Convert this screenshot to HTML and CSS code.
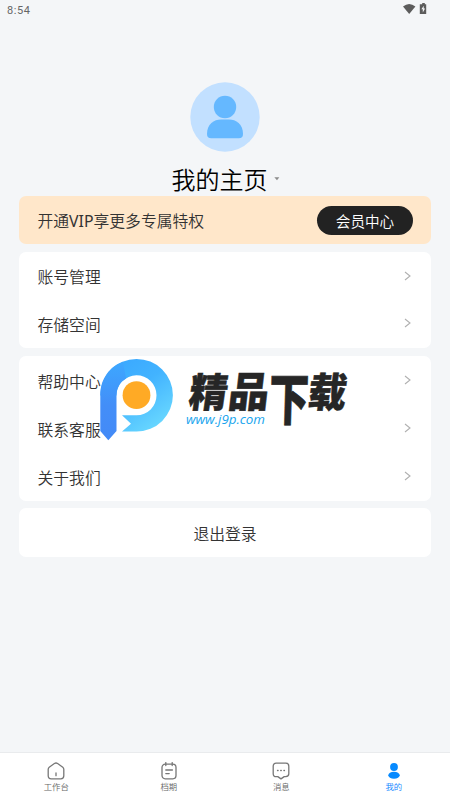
FILE: index.html
```html
<!DOCTYPE html>
<html lang="zh-CN">
<head>
<meta charset="utf-8">
<title>我的主页</title>
<link rel="stylesheet" href="styles.css">
</head>
<body>
<div class="app">
  <header class="status">
    <span>8:54</span>
    <svg width="26" height="12" viewBox="0 0 26 12" fill="#5c5c5c">
      <path d="M0 3.600Q6.200-1.500 12.400 3.600L6.200 11z"/>
      <path d="M17.800 1.200h1.400V0h2.600v1.200h1.400V11h-6.400V1.200z"/>
      <path fill="#f4f6f8" d="M20.700 2.700 18.400 6.300h1.400v3.100l2.300-3.900h-1.400z"/>
    </svg>
  </header>
  <main>
    <section class="profile">
      <svg class="avatar" width="70" height="70" viewBox="0 0 70 70">
        <circle cx="35" cy="35" r="34.700" fill="#c2e0ff"/>
        <circle cx="35" cy="25" r="11.200" fill="#65b8ff"/>
        <path fill="#65b8ff" d="M17 52C17 42 24 37.500 31 37.500h8c7 0 14 4.500 14 14.500q0 4.300-4.200 4.300H21.200Q17 56.300 17 52z"/>
      </svg>
      <h1>我的主页<svg width="6" height="4" viewBox="0 0 6 4"><path d="M.3.3h5L3 3.300z" fill="#8c8c8c"/></svg></h1>
    </section>
    <section class="card vip"><span>开通<span class="latin">VIP</span>享更多专属特权</span><button>会员中心</button></section>
    <section class="card pair">
      <div class="row">账号管理<svg class="arrow" viewBox="0 0 7 10"><path d="M1 1l5 4-5 4"/></svg></div>
      <div class="row">存储空间<svg class="arrow" viewBox="0 0 7 10"><path d="M1 1l5 4-5 4"/></svg></div>
    </section>
    <section class="card triple">
      <div class="row">帮助中心<svg class="arrow" viewBox="0 0 7 10"><path d="M1 1l5 4-5 4"/></svg></div>
      <div class="row">联系客服<svg class="arrow" viewBox="0 0 7 10"><path d="M1 1l5 4-5 4"/></svg></div>
      <div class="row">关于我们<svg class="arrow" viewBox="0 0 7 10"><path d="M1 1l5 4-5 4"/></svg></div>
    </section>
    <section class="card logout">退出登录</section>
  </main>
  <nav>
    <div class="tab">
      <svg viewBox="0 0 18 18"><path d="M1.200 7.200Q1.200 6 2.200 5.200L7.400 1.500Q9 .5 10.600 1.500l5.200 3.700q1 .8 1 2v6.600q0 3-3 3H4.200q-3 0-3-3zM9 11v2.700"/></svg>工作台
    </div>
    <div class="tab">
      <svg viewBox="0 0 18 18"><rect x="2" y="2.200" width="14" height="14.600" rx="3.200"/><path d="M5.800.6v3M12.200.6v3M5.800 8h6.600M5.800 11.600h3.400"/></svg>档期
    </div>
    <div class="tab">
      <svg viewBox="0 0 18 18"><path d="M4.200 1.200h9.600q3 0 3 3v7.600q0 2.800-3 2.800h-1.600L9 16.900l-3.200-2.300H4.200q-3 0-3-2.800V4.200q0-3 3-3z"/><path d="M5.500 8.500h.6M8.700 8.500h.6M11.900 8.500h.6"/></svg>消息
    </div>
    <div class="tab active">
      <svg viewBox="0 0 18 18"><circle cx="9" cy="5" r="3.900"/><ellipse cx="9" cy="13.200" rx="5.700" ry="3.500"/></svg>我的
    </div>
  </nav>
  <svg class="brand" width="260" height="90" viewBox="95 355 260 90">
    <defs>
      <linearGradient id="bowl" x1="0" y1="0" x2=".7" y2="1"><stop offset="0" stop-color="#38a5ff"/><stop offset=".5" stop-color="#42b3ff"/><stop offset="1" stop-color="#68d7ff"/></linearGradient>
      <linearGradient id="stem" x1="0" y1="0" x2="0" y2="1"><stop offset="0" stop-color="#3da8ff"/><stop offset=".55" stop-color="#438ef8"/><stop offset="1" stop-color="#438af7"/></linearGradient>
    </defs>
    <circle cx="136.500" cy="395" r="22" fill="#fff"/>
    <path fill="url(#bowl)" d="M100.300 395.500A36.300 36.300 0 1 1 136.500 431.500H122l9-7.800-9-8.400H136.500A20 20 0 1 0 116.500 395.500z"/>
    <path fill="url(#stem)" d="M100.300 395C100.300 379 110 366 123 361.800L126 378.500Q116.500 384 116.500 395V431L108.300 440.300 100.300 431z"/>
    <circle cx="136.500" cy="395.200" r="13.900" fill="#ffaa25"/>
    <g class="brand-name">
      <text transform="matrix(.96 0 -.14 1 187.500 406.500)">精</text>
      <text transform="matrix(1.020 0 -.12 1.040 227 407)">品</text>
      <text transform="matrix(1 0 -.04 1.400 268.500 420)">下</text>
      <text transform="matrix(.96 0 -.13 1 306.500 406.500)">载</text>
    </g>
    <text class="brand-url" x="186" y="423.500" textLength="79" lengthAdjust="spacingAndGlyphs">www.j9p.com</text>
  </svg>
</div>
</body>
</html>
```
FILE: styles.css
```css
* { box-sizing: border-box; }
body { margin: 0; background: #f4f6f8; font-family: "Noto Sans CJK SC", sans-serif; color: #333; }
.app { position: relative; height: 800px; display: flex; flex-direction: column; }
.status { height: 20px; padding: 0 21px 0 7px; display: flex; align-items: center; justify-content: space-between; font: 11px Roboto, sans-serif; letter-spacing: .6px; color: #666; }
.status svg { margin-top: -2px; }
main { flex: 1; padding: 0 19px; }
.profile { height: 176px; padding-top: 62px; display: flex; flex-direction: column; align-items: center; }
.avatar { flex: none; }
h1 { margin: 9px 0 0 5px; font-size: 24px; line-height: 36px; font-weight: 350; color: #000; display: flex; align-items: center; gap: 6px; }
h1 svg { margin-right: 4px; margin-top: -1px; }
.card { background: #fff; border-radius: 7px; font-size: 15.8px; font-weight: 350; }
.vip { height: 48px; margin-bottom: 8px; padding: 0 18px 0 18.5px; background: #ffe7ca; display: flex; align-items: center; justify-content: space-between; line-height: 24px; }
.vip > span { margin-top: 1px; }
.latin { font-family: "Noto Sans", sans-serif; font-weight: 400; font-size: 15.8px; }
.vip button { width: 96px; height: 29px; padding: 0; border: 0; border-radius: 15px; background: #222; color: #fff; font: 350 14.6px/27px "Noto Sans CJK SC", sans-serif; }
.pair, .triple { display: grid; padding: 1px 20px 0 18.5px; }
.pair { height: 96px; margin-bottom: 8px; }
.triple { height: 145px; margin-bottom: 7px; }
.row { display: flex; align-items: center; justify-content: space-between; }
.arrow { width: 7px; height: 10px; margin-top: -2px; fill: none; stroke: #b0b0b0; stroke-width: 1.1; }
.logout { height: 49px; display: flex; align-items: center; justify-content: center; padding-top: 1px; }
nav { height: 48px; background: #fff; border-top: 1px solid #e9ebed; display: grid; grid-template-columns: repeat(4, 1fr); }
.tab { display: flex; flex-direction: column; align-items: center; padding-top: 9px; font-size: 8.4px; line-height: 13px; font-weight: 350; color: #666; }
.tab svg { width: 18px; height: 18px; fill: none; stroke: #777; stroke-width: 1.3; stroke-linecap: round; stroke-linejoin: round; }
.tab.active { color: #087fff; }
.tab.active svg { fill: #078aff; stroke: none; }
.brand { position: absolute; left: 95px; top: 355px; }
.brand-name { font-family: "Noto Sans CJK SC", sans-serif; font-size: 40px; font-weight: 900; fill: #262626; stroke: #262626; stroke-width: .5; }
.brand-url { font-family: "Open Sans", sans-serif; font-size: 13.5px; font-style: italic; fill: #18a5ee; }
```
